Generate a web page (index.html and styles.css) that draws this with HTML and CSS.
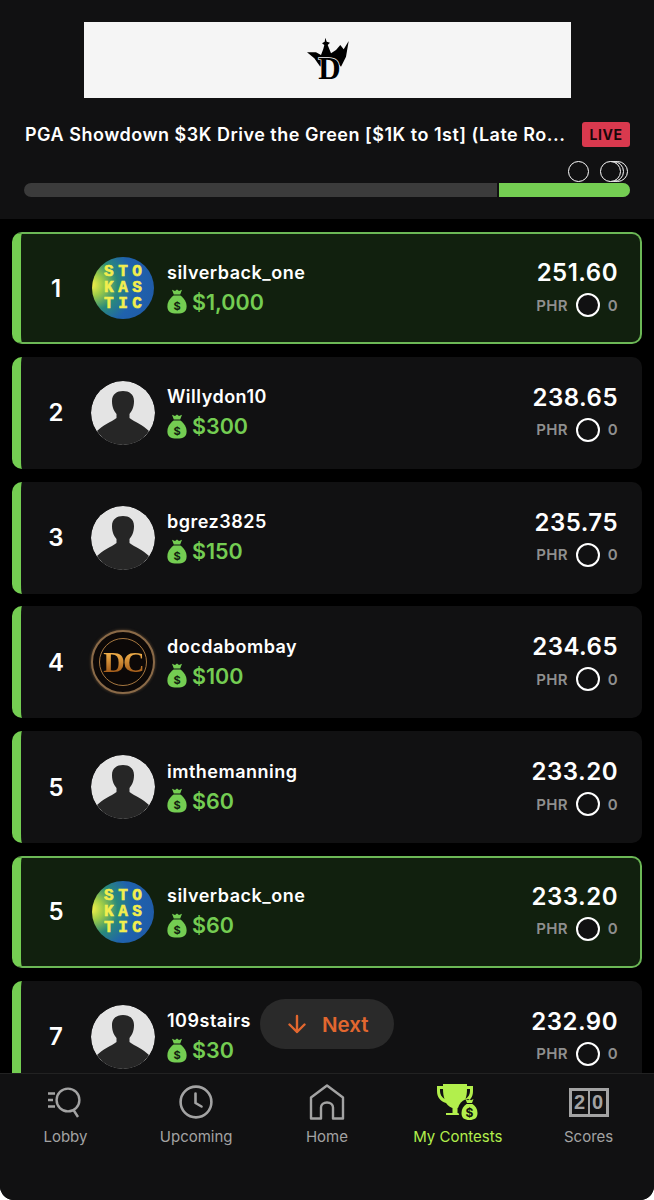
FILE: index.html
```html
<!DOCTYPE html>
<html lang="en">
<head>
	<meta charset="UTF-8">
	<title>PGA Showdown - My Contests</title>
	<link rel="stylesheet" href="styles.css">
</head>
<body>

<svg class="defs" width="0" height="0">
	<symbol id="bag" viewBox="0 0 20 25">
		<path d="M5 0.8 L8 2 L10 0.6 L12 2 L15 0.8 L13.2 5.4 L6.8 5.4 Z"/>
		<path d="M6.6 6.6 L13.4 6.6 C17 9.2 19.6 13 19.6 17.4 C19.6 22.4 16.4 24.6 10 24.6 C3.6 24.6 0.4 22.4 0.4 17.4 C0.4 13 3 9.2 6.6 6.6 Z"/>
	</symbol>
	<symbol id="person" viewBox="0 0 64 64">
		<circle cx="32" cy="32" r="32" fill="#e4e4e4"/>
		<path d="M21 20 C21 13 26 10 32 10 C38 10 43 13 43 20 C43 26 41 30 38.5 33 L38.5 37 C44 41 52 44 58 50 C52 59 43 64 32 64 C21 64 12 59 6 50 C12 44 20 41 25.5 37 L25.5 33 C23 30 21 26 21 20 Z" fill="#262626"/>
	</symbol>
</svg>

<div class="app">
	<header class="top">
		<div class="banner">
			<svg class="dk-logo" width="44" height="58" viewBox="0 -6 44 58">
				<path d="M1 15.3 L10 15.3 L15 18 L17.3 12 L18.3 8 L16 6.3 L18.7 4.7 L19.3 0.7 L20.7 4.7 L24 5.7 L21.7 8 L25 16.3 L30 13 L34.3 8 L37.7 12.3 L42.7 4 L40 19.7 L35 29.7 L28.3 23 L20 21.3 L14.3 29.7 L8.3 21.3 Z" fill="#000"/>
				<text x="23.5" y="42" class="dk-d">D</text>
			</svg>
		</div>
		<div class="title-row">
			<div class="title">PGA Showdown $3K Drive the Green [$1K to 1st] (Late Ro...</div>
			<div class="live">LIVE</div>
		</div>
		<div class="progress">
			<div class="dots">
				<span class="dot d1"></span>
				<span class="dot d2"></span>
				<span class="dot d3"></span>
				<span class="dot d4"></span>
			</div>
			<div class="bar"><div class="bar-fill"></div></div>
		</div>
	</header>

	<main class="list">
		<div class="row mine">
			<div class="rank">1</div>
			<div class="avatar stokastic"><span>STO</span><span>KAS</span><span>TIC</span></div>
			<div class="who">
				<div class="name">silverback_one</div>
				<div class="prize"><svg class="bag" width="20" height="25"><use href="#bag"/><text x="10" y="20.6" class="bag-sign">$</text></svg>$1,000</div>
			</div>
			<div class="score">
				<div class="pts">251.60</div>
				<div class="phr">PHR <span class="ring"></span> 0</div>
			</div>
		</div>
		<div class="row">
			<div class="rank">2</div>
			<svg class="avatar" width="64" height="64"><use href="#person"/></svg>
			<div class="who">
				<div class="name">Willydon10</div>
				<div class="prize"><svg class="bag" width="20" height="25"><use href="#bag"/><text x="10" y="20.6" class="bag-sign">$</text></svg>$300</div>
			</div>
			<div class="score">
				<div class="pts">238.65</div>
				<div class="phr">PHR <span class="ring"></span> 0</div>
			</div>
		</div>
		<div class="row">
			<div class="rank">3</div>
			<svg class="avatar" width="64" height="64"><use href="#person"/></svg>
			<div class="who">
				<div class="name">bgrez3825</div>
				<div class="prize"><svg class="bag" width="20" height="25"><use href="#bag"/><text x="10" y="20.6" class="bag-sign">$</text></svg>$150</div>
			</div>
			<div class="score">
				<div class="pts">235.75</div>
				<div class="phr">PHR <span class="ring"></span> 0</div>
			</div>
		</div>
		<div class="row">
			<div class="rank">4</div>
			<div class="avatar docdab"><span class="docdab-in">DC</span></div>
			<div class="who">
				<div class="name">docdabombay</div>
				<div class="prize"><svg class="bag" width="20" height="25"><use href="#bag"/><text x="10" y="20.6" class="bag-sign">$</text></svg>$100</div>
			</div>
			<div class="score">
				<div class="pts">234.65</div>
				<div class="phr">PHR <span class="ring"></span> 0</div>
			</div>
		</div>
		<div class="row">
			<div class="rank">5</div>
			<svg class="avatar" width="64" height="64"><use href="#person"/></svg>
			<div class="who">
				<div class="name">imthemanning</div>
				<div class="prize"><svg class="bag" width="20" height="25"><use href="#bag"/><text x="10" y="20.6" class="bag-sign">$</text></svg>$60</div>
			</div>
			<div class="score">
				<div class="pts">233.20</div>
				<div class="phr">PHR <span class="ring"></span> 0</div>
			</div>
		</div>
		<div class="row mine">
			<div class="rank">5</div>
			<div class="avatar stokastic"><span>STO</span><span>KAS</span><span>TIC</span></div>
			<div class="who">
				<div class="name">silverback_one</div>
				<div class="prize"><svg class="bag" width="20" height="25"><use href="#bag"/><text x="10" y="20.6" class="bag-sign">$</text></svg>$60</div>
			</div>
			<div class="score">
				<div class="pts">233.20</div>
				<div class="phr">PHR <span class="ring"></span> 0</div>
			</div>
		</div>
		<div class="row">
			<div class="rank">7</div>
			<svg class="avatar" width="64" height="64"><use href="#person"/></svg>
			<div class="who">
				<div class="name">109stairs</div>
				<div class="prize"><svg class="bag" width="20" height="25"><use href="#bag"/><text x="10" y="20.6" class="bag-sign">$</text></svg>$30</div>
			</div>
			<div class="score">
				<div class="pts">232.90</div>
				<div class="phr">PHR <span class="ring"></span> 0</div>
			</div>
		</div>
	</main>

	<div class="next">
		<svg width="20" height="20" viewBox="0 0 20 20"><path d="M10 2 V18 M2.5 10.5 L10 18 L17.5 10.5" fill="none" stroke="#e2672f" stroke-width="2.4" stroke-linecap="round" stroke-linejoin="round"/></svg>
		<span>Next</span>
	</div>

	<nav class="tabs">
		<div class="tab">
			<svg width="36" height="32" viewBox="0 0 36 32" fill="none" stroke="#a3a3a3" stroke-width="2.4">
				<circle cx="21" cy="14" r="11.4"/>
				<path d="M26.5 24 L31 31 M1 7.5 H8 M1 14 H6 M1 20.5 H8"/>
			</svg>
			<span>Lobby</span>
		</div>
		<div class="tab">
			<svg width="34" height="34" viewBox="0 0 34 34" fill="none" stroke="#a3a3a3" stroke-width="2.6">
				<circle cx="17" cy="17" r="15.4"/>
				<path d="M16.5 8.5 V18 L22.5 21.5" stroke-linecap="round" stroke-linejoin="round"/>
			</svg>
			<span>Upcoming</span>
		</div>
		<div class="tab">
			<svg width="36" height="37" viewBox="0 0 36 37" fill="none" stroke="#a3a3a3" stroke-width="2.4" stroke-linejoin="round">
				<path d="M2 35 V14 L18 2 L34 14 V35 H24 V24 C24 21 21.5 19 18 19 C14.5 19 12 21 12 24 V35 Z"/>
			</svg>
			<span>Home</span>
		</div>
		<div class="tab active">
			<svg width="44" height="38" viewBox="0 0 44 38">
				<path d="M7 1 H31 V3 H37 V8 C37 14 34 18 28 20 C26 23 23 24.5 21.5 25 V30 H27 V32 H10 V30 H16.5 V25 C15 24.5 12 23 10 20 C4 18 1 14 1 8 V3 H7 Z M4 6 V8 C4 11 5.5 14 8.5 16 C7.5 13 7 10 7 6 Z M31 6 C31 10 30.5 13 29.5 16 C32.5 14 34 11 34 8 V6 Z" fill="#b2ef4c"/>
				<circle cx="33" cy="27" r="11" fill="#111"/>
				<path d="M29.5 16 L32 17.2 L33.5 16 L35 17.2 L37.5 16 L36 20 H31 Z M30.5 21 H36.5 C39.5 23 41.5 26 41.5 30 C41.5 35 38.5 37 33.5 37 C28.5 37 25.5 35 25.5 30 C25.5 26 27.5 23 30.5 21 Z" fill="#b2ef4c"/>
				<text x="33.5" y="33.5" class="tab-sign">$</text>
			</svg>
			<span>My Contests</span>
		</div>
		<div class="tab">
			<div class="board"><span>2</span><span>0</span></div>
			<span>Scores</span>
		</div>
	</nav>
</div>

</body>
</html>
```

FILE: styles.css
```css
* {
	box-sizing: border-box;
}

html, body {
	margin: 0;
	padding: 0;
	background: #fff;
}

.defs {
	position: absolute;
}

.app {
	position: relative;
	display: flex;
	flex-direction: column;
	width: 654px;
	height: 1200px;
	background: #000;
	border-radius: 0 0 14px 14px;
	overflow: hidden;
	font-family: Inter, "Noto Sans", sans-serif;
	color: #fff;
}

/* header */
.top {
	flex: none;
	height: 219px;
	padding: 22px 24px 0 25px;
	background: #111112;
}

.banner {
	display: flex;
	align-items: center;
	justify-content: center;
	width: 487px;
	height: 76px;
	margin: 0 0 0 59px;
	background: #f5f5f5;
}

.dk-d {
	fill: #000;
	stroke: #f5f5f5;
	stroke-width: 1.4px;
	paint-order: stroke;
	font-family: "Liberation Serif", serif;
	font-size: 31px;
	font-weight: 700;
	text-anchor: middle;
}

.title-row {
	display: flex;
	align-items: center;
	justify-content: space-between;
	margin-top: 23px;
	height: 26px;
}

.title {
	font-size: 18px;
	font-weight: 600;
	letter-spacing: 0.5px;
	white-space: nowrap;
}

.live {
	width: 48px;
	height: 25px;
	border-radius: 3px;
	background: #d9394e;
	color: #17080a;
	font-size: 14px;
	font-weight: 700;
	letter-spacing: 0.5px;
	line-height: 25px;
	text-align: center;
}

.progress {
	margin-top: 14px;
	margin-left: -1px;
}

.dots {
	position: relative;
	height: 22px;
}

.dot {
	position: absolute;
	top: 0;
	width: 21px;
	height: 21px;
	border: 1.5px solid #fff;
	border-radius: 50%;
}

.d1 { left: 544px; }
.d2 { left: 583px; }
.d3 { left: 579px; }
.d4 { left: 576px; background: #111112; }

.bar {
	height: 14px;
	border-radius: 7px;
	background: #3b3b3b;
	overflow: hidden;
}

.bar-fill {
	width: 133px;
	height: 14px;
	margin-left: auto;
	background: #74cd52;
	border-left: 2px solid #111112;
}

/* standings */
.list {
	flex: 1;
	display: flex;
	flex-direction: column;
	gap: 12.8px;
	padding: 13px 12px 0 12px;
	min-height: 0;
	overflow: hidden;
}

.row {
	flex: none;
	display: flex;
	align-items: center;
	height: 112px;
	padding: 0 24px 0 0;
	border-left: 9px solid #74cd52;
	border-radius: 10px;
	background: #111112;
}

.row.mine {
	padding-right: 22px;
	background: #11200e;
	border: 2px solid #6cb856;
	border-left: 9px solid #74cd52;
}

.rank {
	width: 70px;
	font-size: 24px;
	font-weight: 600;
	text-align: center;
}

.avatar {
	flex: none;
	width: 64px;
	height: 64px;
	border-radius: 50%;
}

.stokastic {
	display: flex;
	flex-direction: column;
	align-items: center;
	justify-content: center;
	width: 62px;
	height: 62px;
	margin: 0 1px;
	background: radial-gradient(circle at 0% 45%, #f4f04a 0, #9ccb48 16%, #2a8a7a 36%, #1f62ad 60%, #2059a6 100%);
	color: #f3ee4e;
	font-family: "Liberation Mono", monospace;
	font-size: 16px;
	font-weight: 700;
	letter-spacing: 4.5px;
	line-height: 16px;
	-webkit-text-stroke: 0.6px #f3ee4e;
}

.stokastic span {
	padding-left: 4.5px;
}

.docdab {
	display: flex;
	align-items: center;
	justify-content: center;
	background: #0c0807;
	border: 2px solid #8a6a48;
	box-shadow: 0 0 3px #6b5238;
}

.docdab-in {
	display: flex;
	align-items: center;
	justify-content: center;
	width: 48px;
	height: 48px;
	border: 1.5px solid #a5763f;
	border-radius: 50%;
	background: linear-gradient(180deg, #f2b04a 30%, #a8601c 70%);
	-webkit-background-clip: text;
	background-clip: text;
	color: transparent;
	font-family: "Liberation Serif", serif;
	font-size: 30px;
	font-weight: 700;
	letter-spacing: -2px;
}

.who {
	flex: 1;
	margin-left: 12px;
}

.name {
	margin-top: 1px;
	font-size: 18px;
	font-weight: 600;
	letter-spacing: 0.5px;
	line-height: 22px;
}

.prize {
	display: flex;
	align-items: center;
	gap: 5px;
	margin-top: 4px;
	color: #74cd52;
	font-size: 21.5px;
	font-weight: 600;
	line-height: 28px;
}

.bag {
	fill: #74cd52;
}

.bag-sign {
	fill: #11200e;
	font-family: Inter, sans-serif;
	font-size: 11px;
	font-weight: 700;
	text-anchor: middle;
}

.score {
	text-align: right;
}

.pts {
	margin-top: -1px;
	font-size: 24px;
	font-weight: 600;
	letter-spacing: 0.5px;
	line-height: 30px;
}

.phr {
	display: flex;
	align-items: center;
	justify-content: flex-end;
	gap: 8px;
	margin-top: 5px;
	color: #8f8f8f;
	font-size: 15px;
	font-weight: 600;
	letter-spacing: 0.3px;
}

.ring {
	width: 24px;
	height: 24px;
	border: 2px solid #fff;
	border-radius: 50%;
	background: #111112;
}

/* floating button */
.next {
	position: absolute;
	left: 260px;
	top: 999px;
	display: flex;
	align-items: center;
	gap: 15px;
	width: 134px;
	height: 50px;
	padding-left: 27px;
	border-radius: 25px;
	background: #2a2a2a;
	color: #e2672f;
	font-size: 20.5px;
	font-weight: 600;
}

/* tab bar */
.tabs {
	flex: none;
	display: flex;
	height: 127px;
	padding-top: 9px;
	background: #111112;
	border-top: 1px solid #222;
}

.tab {
	flex: 1;
	display: flex;
	flex-direction: column;
	align-items: center;
	color: #a3a3a3;
	font-size: 15px;
}

.tab svg, .board {
	flex: none;
	height: 38px;
	margin-bottom: 6px;
}

.tab.active {
	color: #b2ef4c;
}

.tab-sign {
	fill: #111;
	font-family: Inter, sans-serif;
	font-size: 12px;
	font-weight: 700;
	text-anchor: middle;
}

.board {
	display: flex;
	width: 40px;
	height: 29px;
	margin-top: 5px;
	margin-bottom: 10px;
	border: 3px solid #a3a3a3;
	font-family: "Liberation Sans", sans-serif;
	font-size: 20px;
	font-weight: 700;
	line-height: 23px;
}

.board span {
	flex: 1;
	text-align: center;
}

.board span + span {
	border-left: 2px solid #a3a3a3;
}
```
